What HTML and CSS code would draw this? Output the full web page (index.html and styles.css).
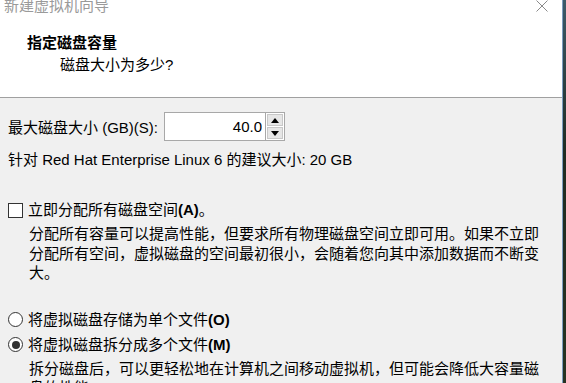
FILE: index.html
```html
<!DOCTYPE html>
<html lang="zh-CN">

<head>
    <meta charset="UTF-8">
    <meta name="viewport" content="width=device-width, initial-scale=1.0">
    <title>新建虚拟机向导</title>
    <link rel="stylesheet" href="styles.css">
</head>

<body>
    <div class="window">
        <div class="header">
            <div class="titlebar">
                <span class="title">新建虚拟机向导</span>
                <svg class="close" width="12" height="12" viewBox="0 0 12 12">
                    <path d="M0.5 0.5 L11.5 11.5 M11.5 0.5 L0.5 11.5" stroke="#8a8a8a" stroke-width="1" fill="none"/>
                </svg>
            </div>
            <h1>指定磁盘容量</h1>
            <p class="subtitle">磁盘大小为多少?</p>
        </div>

        <div class="content">
            <div class="size-row">
                <label for="diskSize">最大磁盘大小 (GB)(S):</label>
                <div class="spinbox">
                    <input type="text" id="diskSize" value="40.0">
                    <div class="spin-buttons">
                        <span class="spin up"></span>
                        <span class="spin down"></span>
                    </div>
                </div>
            </div>
            <p class="hint">针对 Red Hat Enterprise Linux 6 的建议大小: 20 GB</p>

            <div class="option check-option">
                <span class="checkbox"></span>
                <span>立即分配所有磁盘空间<b>(A)</b>。</span>
            </div>
            <p class="desc">分配所有容量可以提高性能，但要求所有物理磁盘空间立即可用。如果不立即分配所有空间，虚拟磁盘的空间最初很小，会随着您向其中添加数据而不断变大。</p>

            <div class="option radio-first">
                <span class="radio"></span>
                <span>将虚拟磁盘存储为单个文件<b>(O)</b></span>
            </div>
            <div class="option radio-second">
                <span class="radio checked"></span>
                <span>将虚拟磁盘拆分成多个文件<b>(M)</b></span>
            </div>
            <p class="desc">拆分磁盘后，可以更轻松地在计算机之间移动虚拟机，但可能会降低大容量磁盘的性能。</p>
        </div>
    </div>
</body>

</html>
```

FILE: styles.css
```css
body {
    margin: 0;
    height: 383px;
    overflow: hidden;
    background: linear-gradient(#3d5a6a, #1f2b22 40%, #263322);
    font-family: "Liberation Sans", "Noto Sans CJK SC", sans-serif;
    font-size: 15px;
    color: #000;
}

.window {
    width: 562px;
    height: 383px;
    background-color: #f0f0f0;
    border-right: 1px solid #7c9cc0;
    overflow: hidden;
}

.header {
    background-color: #fff;
    height: 97px;
    border-bottom: 1px solid #a0a0a0;
}

.titlebar {
    display: flex;
    justify-content: space-between;
    align-items: flex-start;
    height: 14px;
    padding: 0 14px 0 4px;
}

.title {
    color: #9a9a9a;
    line-height: 16px;
    margin-top: -2px;
}

h1 {
    margin: 20px 0 0 27px;
    font-size: 15px;
    font-weight: bold;
    line-height: 18px;
}

.subtitle {
    margin: 4px 0 0 60px;
    line-height: 18px;
}

.content {
    padding: 0 8px;
}

.size-row {
    display: flex;
    align-items: center;
    margin-top: 14px;
    height: 29px;
}

.size-row label {
    width: 156px;
}

.spinbox {
    display: flex;
    height: 29px;
}

.spinbox input {
    width: 101px;
    height: 29px;
    box-sizing: border-box;
    border: 1px solid #a8a8a8;
    border-right: none;
    padding: 0 3px 0 0;
    text-align: right;
    font-family: inherit;
    font-size: 15px;
    color: #000;
    background: #fff;
    outline: none;
}

.spin-buttons {
    display: flex;
    flex-direction: column;
    width: 20px;
    border: 1px solid #a8a8a8;
    box-sizing: border-box;
    background: #fff;
    padding: 1px;
    gap: 1px;
}

.spin {
    flex: 1;
    background: #e6e6e6;
    border: 1px solid #c8c8c8;
    display: flex;
    align-items: center;
    justify-content: center;
}

.spin::after {
    content: "";
    border-left: 4px solid transparent;
    border-right: 4px solid transparent;
}

.spin.up::after {
    border-bottom: 5px solid #000;
}

.spin.down::after {
    border-top: 5px solid #000;
}

.hint {
    margin: 9px 0 0;
    line-height: 20px;
}

.option {
    display: flex;
    align-items: center;
    gap: 5px;
    line-height: 20px;
}

.option b {
    font-weight: bold;
}

.check-option {
    margin-top: 30px;
}

.checkbox {
    width: 13px;
    height: 13px;
    border: 1px solid #333;
    background: #fff;
}

.radio {
    width: 13px;
    height: 13px;
    border: 1px solid #333;
    border-radius: 50%;
    background: #fff;
    display: flex;
    align-items: center;
    justify-content: center;
}

.radio.checked::after {
    content: "";
    width: 8px;
    height: 8px;
    border-radius: 50%;
    background: #333;
}

.desc {
    margin: 4px 0 0 21px;
    width: 516px;
    line-height: 19.5px;
}

.radio-first {
    margin-top: 27px;
}

.radio-second {
    margin-top: 5px;
}
```
